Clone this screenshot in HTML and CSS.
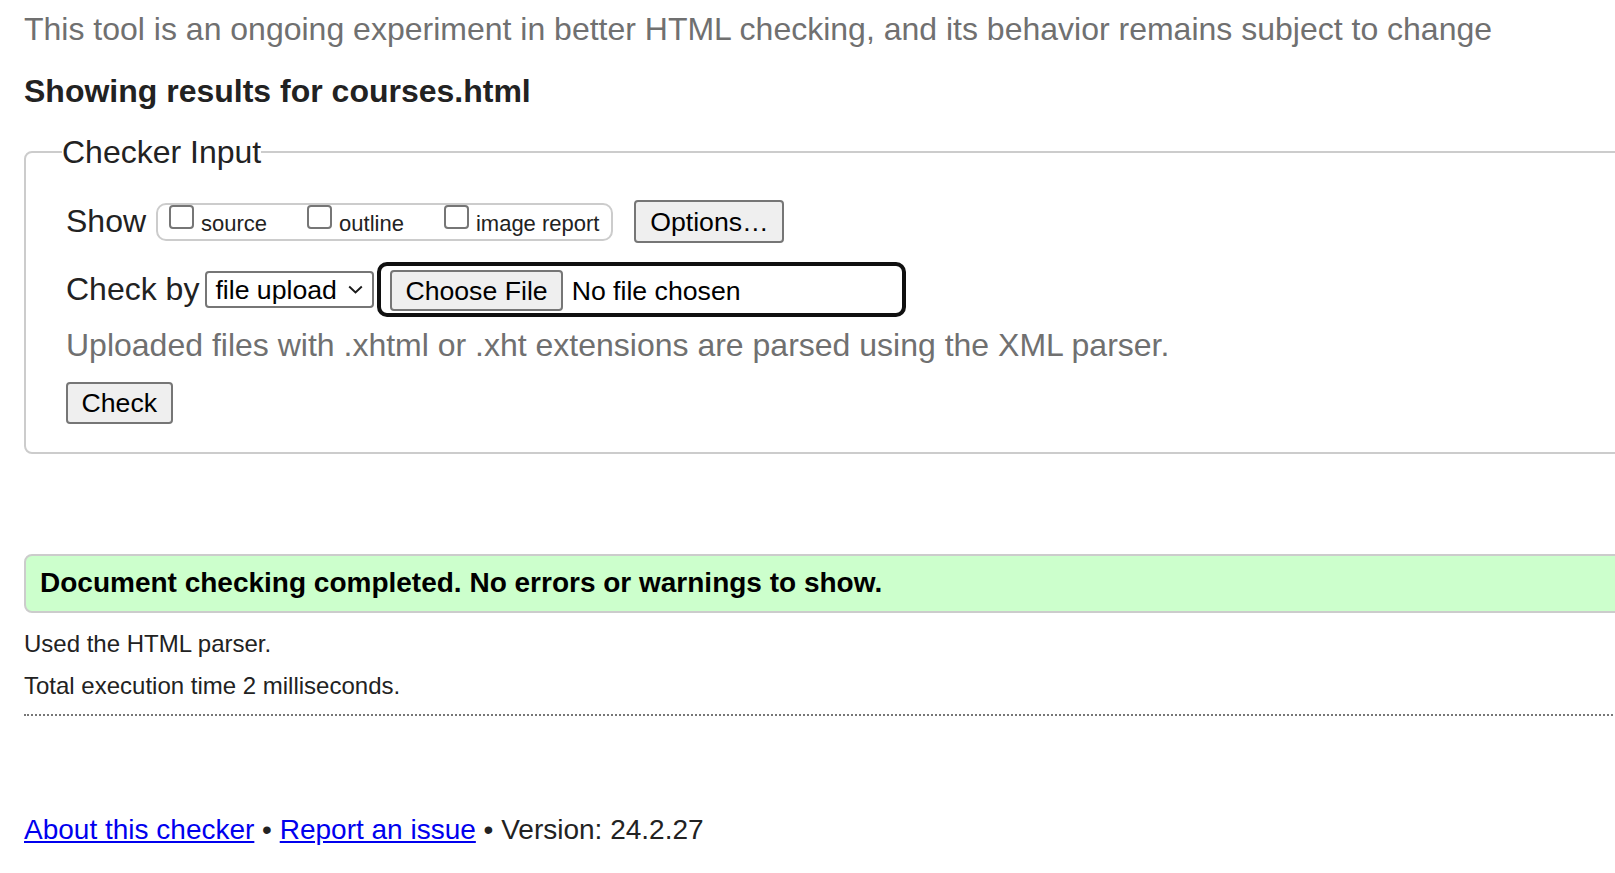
FILE: index.html
```html
<!DOCTYPE html>
<html lang="en">
<head>
<meta charset="utf-8">
<title>Showing results for courses.html - Nu Html Checker</title>
<link rel="stylesheet" href="styles.css">
</head>
<body>
<div class="page">
  <p class="intro">This tool is an ongoing experiment in better HTML checking, and its behavior remains subject to change</p>
  <h2 class="heading">Showing results for courses.html</h2>
  <form class="checker">
    <fieldset class="input-box">
      <legend class="legend">Checker Input</legend>
      <div class="box-body">
        <div class="row row-show">
          <span class="row-label">Show</span>
          <span class="options-group">
            <label class="opt"><input type="checkbox" class="cb">source</label>
            <label class="opt"><input type="checkbox" class="cb">outline</label>
            <label class="opt"><input type="checkbox" class="cb">image report</label>
          </span>
          <button type="button" class="btn btn-options">Options…</button>
        </div>
        <div class="row row-check">
          <label class="row-label row-label-check" for="docselect">Check by</label>
          <span class="select">
            <select id="docselect" class="select-native"><option>file upload</option></select>
            <svg class="chevron" width="15" height="9" viewBox="0 0 15 9" aria-hidden="true"><polyline points="1.2,1.5 7.5,7.5 13.8,1.5" fill="none" stroke="#1a1a1a" stroke-width="1.9"/></svg>
          </span>
          <span class="file-field">
            <button type="button" class="btn btn-file">Choose File</button>
            <span class="file-status">No file chosen</span>
          </span>
        </div>
        <p class="note">Uploaded files with .xhtml or .xht extensions are parsed using the XML parser.</p>
        <div class="submit-row"><button type="submit" class="btn btn-check">Check</button></div>
      </div>
    </fieldset>
  </form>
  <p class="success">Document checking completed. No errors or warnings to show.</p>
  <p class="details">Used the HTML parser.</p>
  <p class="details details-time">Total execution time 2 milliseconds.</p>
  <hr class="divider">
  <p class="footer"><a href="#" class="link">About this checker</a> • <a href="#" class="link">Report an issue</a> • Version: 24.2.27</p>
</div>
</body>
</html>
```

FILE: styles.css
```css
html, body {
  margin: 0;
  padding: 0;
  overflow: hidden;
  background: #ffffff;
}

body {
  font-family: "Liberation Sans", Arial, sans-serif;
  color: #222222;
  line-height: 1.15;
}

.page {
  width: 1700px;
  padding-left: 24px;
  display: flex;
  flex-direction: column;
  align-items: stretch;
}

.intro {
  margin: 11px 0 0;
  font-size: 32px;
  color: #707070;
}

.heading {
  margin: 25px 0 0;
  font-size: 32px;
  font-weight: bold;
  color: #222222;
}

.checker {
  margin: 0;
}

.input-box {
  margin: 24px 0 0;
  padding: 30px 0 28px 36px;
  border: 2px solid #cccccc;
  border-radius: 8px;
  min-width: 0;
}

.legend {
  padding: 0;
  font-size: 32px;
  color: #222222;
}

.box-body {
  padding-left: 4px;
  display: flex;
  flex-direction: column;
  align-items: flex-start;
}

.row {
  display: flex;
  align-items: center;
}

.row-label {
  font-size: 32px;
  color: #222222;
  margin-right: 10px;
}

.row-label-check {
  margin-right: 6px;
}

.options-group {
  display: flex;
  align-items: flex-start;
  column-gap: 40px;
  border: 2px solid #cccccc;
  border-radius: 10px;
  padding: 0 12px 2px 11px;
}

.opt {
  font-size: 22px;
  color: #222222;
  line-height: normal;
  white-space: nowrap;
}

.cb {
  appearance: none;
  -webkit-appearance: none;
  display: inline-block;
  box-sizing: border-box;
  width: 25px;
  height: 24px;
  margin: 0 7px 0 0;
  border: 2px solid #767676;
  border-radius: 4px;
  background: #ffffff;
  vertical-align: 2px;
}

.btn {
  font-family: "Liberation Sans", Arial, sans-serif;
  font-size: 26.67px;
  line-height: 1;
  color: #000000;
  background: #efefef;
  border: 2px solid #767676;
  border-radius: 4px;
  padding: 0 13px;
  box-sizing: border-box;
}

.btn-options {
  width: 150px;
  height: 43px;
  padding: 0;
  margin-left: 21px;
}

.row-check {
  margin-top: 19px;
}

.select {
  display: inline-flex;
  align-items: center;
  justify-content: space-between;
  box-sizing: border-box;
  width: 169px;
  height: 37px;
  padding: 0 9px 0 8px;
  border: 2px solid #767676;
  border-radius: 4px;
  margin-right: 3px;
  background: #ffffff;
}

.select-native {
  appearance: none;
  -webkit-appearance: none;
  border: 0;
  padding: 0;
  margin: 0;
  background: transparent;
  font-family: "Liberation Sans", Arial, sans-serif;
  font-size: 26.67px;
  color: #000000;
  outline: none;
}

.chevron {
  display: block;
}

.file-field {
  display: inline-flex;
  align-items: center;
  box-sizing: border-box;
  width: 529px;
  height: 55px;
  padding: 2px 0 0 9px;
  border: 4px solid #101010;
  border-radius: 10px;
}

.btn-file {
  height: 41px;
}

.file-status {
  margin-left: 9px;
  font-size: 26.67px;
  color: #000000;
}

.note {
  margin: 10px 0 0;
  font-size: 32px;
  color: #707070;
}

.submit-row {
  margin-top: 18px;
}

.btn-check {
  height: 42px;
  padding: 0 13.5px;
}

.success {
  margin: 100px 0 0;
  padding: 11px 14px 12px;
  border: 2px solid #cccccc;
  border-radius: 8px;
  background: #ccffcc;
  font-size: 28px;
  font-weight: bold;
  color: #000000;
}

.details {
  margin: 17px 0 0;
  font-size: 24px;
  color: #222222;
}

.details-time {
  margin-top: 14px;
}

.divider {
  margin: 14px 0 0;
  height: 0;
  border: 0;
  border-top: 2px dotted #777777;
}

.footer {
  margin: 98px 0 0;
  font-size: 28px;
  color: #222222;
}

.link {
  color: #0000ee;
  text-decoration: underline;
}
```
